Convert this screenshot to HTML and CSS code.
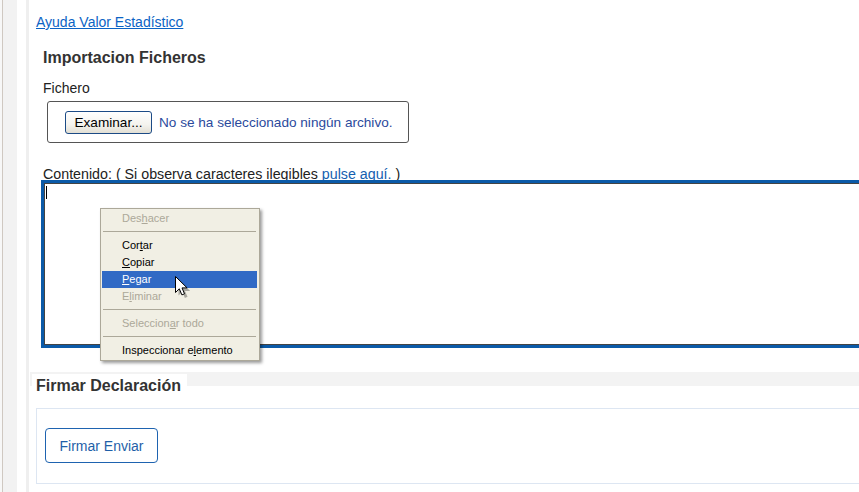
FILE: index.html
```html
<!DOCTYPE html>
<html lang="es">
<head>
<meta charset="utf-8">
<title>Importacion Ficheros</title>
<link rel="stylesheet" href="styles.css">
</head>
<body>
<div class="layout">
  <div class="rail"></div>
  <div class="main">
    <a class="help-link" href="#">Ayuda Valor Estadístico</a>

    <section class="import">
      <h2 class="section-title">Importacion Ficheros</h2>
      <div class="label">Fichero</div>
      <div class="file-box">
        <span class="xp-button">Examinar...</span>
        <span class="file-status">No se ha seleccionado ningún archivo.</span>
      </div>
      <div class="content-label">Contenido: ( Si observa caracteres ilegibles <a class="inline-link" href="#">pulse aquí.</a> )</div>
      <div class="textarea"><span class="caret"></span></div>
    </section>

    <section class="sign">
      <div class="sign-band"></div>
      <div class="legend">Firmar Declaración</div>
      <div class="sign-box">
        <button class="primary-btn" type="button">Firmar Enviar</button>
      </div>
    </section>
  </div>
</div>

<div class="context-menu">
  <div class="menu-item disabled">Des<u>h</u>acer</div>
  <div class="menu-sep"></div>
  <div class="menu-item">Cor<u>t</u>ar</div>
  <div class="menu-item"><u>C</u>opiar</div>
  <div class="menu-item active"><u>P</u>egar</div>
  <div class="menu-item disabled">E<u>l</u>iminar</div>
  <div class="menu-sep"></div>
  <div class="menu-item disabled">Seleccion<u>a</u>r todo</div>
  <div class="menu-sep"></div>
  <div class="menu-item">Inspeccionar e<u>l</u>emento</div>
</div>

<svg class="cursor" width="16" height="24" viewBox="0 0 16 24">
  <path d="M2 2 L2 18 L5.8 14.3 L8.4 20.4 L11 19.3 L8.5 13.4 L13.6 13.4 Z" fill="rgba(0,0,0,0.3)" transform="translate(1.5,1.5)"/>
  <path d="M0.5 0.5 L0.5 16.5 L4.3 12.8 L6.9 18.9 L9.5 17.8 L7 11.9 L12.1 11.9 Z" fill="#fff" stroke="#000" stroke-width="1" stroke-linejoin="miter"/>
</svg>
</body>
</html>
```
FILE: styles.css
```css
html, body {
  margin: 0;
  padding: 0;
}
body {
  width: 859px;
  height: 492px;
  overflow: hidden;
  background: #fff;
  font-family: "Liberation Sans", Arial, sans-serif;
  font-size: 14px;
  color: #222;
  position: relative;
}
.layout {
  display: flex;
  height: 492px;
}
.rail {
  flex: none;
  width: 26px;
  border-right: 3px solid #efefef;
  background: linear-gradient(to right, #f7f7f7 0 2px, #cfc8c1 2px 3px, #f2f2f2 3px 17px, #fff 17px 26px);
}
.main {
  flex: 1;
  min-width: 0;
}
.help-link {
  display: block;
  width: max-content;
  margin: 14px 0 0 7px;
  line-height: 16px;
  color: #0b63c5;
  text-decoration: underline;
}
.import {
  padding-left: 14px;
}
.section-title {
  margin: 18px 0 0 0;
  font-size: 16px;
  line-height: 20px;
  font-weight: bold;
  color: #333;
}
.label {
  margin-top: 12px;
  line-height: 16px;
  color: #222;
}
.file-box {
  margin: 5px 0 0 4px;
  width: 343px;
  height: 40px;
  border: 1px solid #555;
  border-radius: 3px;
  padding-left: 17px;
  display: flex;
  align-items: center;
  gap: 7px;
}
.xp-button {
  box-sizing: border-box;
  width: 87px;
  height: 23px;
  border: 1px solid #1c4b86;
  border-radius: 3px;
  background: linear-gradient(#ffffff, #f4f3ee 60%, #e2dfd4);
  color: #000;
  font-size: 13.6px;
  line-height: 21px;
  text-align: center;
}
.file-status {
  color: #2b4a9c;
  font-size: 13.6px;
}
.content-label {
  margin-top: 24px;
  line-height: 14px;
  font-size: 14.25px;
  color: #222;
}
.inline-link {
  color: #1560b0;
  text-decoration: underline;
  text-decoration-color: #8fb0d8;
}
.textarea {
  position: relative;
  margin: 2px 0 0 1px;
  width: 900px;
  height: 160px;
  border: 1px solid #444;
  box-shadow: 0 0 0 3px #0b5aa8;
  background: #fff;
}
.caret {
  position: absolute;
  left: 1px;
  top: 2px;
  width: 1px;
  height: 13px;
  background: #000;
}
.sign {
  margin: 27px 0 0 1px;
}
.sign-band {
  height: 14px;
  background: #f3f3f3;
}
.legend {
  position: relative;
  width: max-content;
  margin: -12px 0 0 2px;
  padding: 2px 6px 0 4px;
  background: #fff;
  font-size: 16px;
  line-height: 20px;
  font-weight: bold;
  color: #333;
}
.sign-box {
  margin: 12px 0 0 6px;
  width: 900px;
  border: 1px solid #dde6f2;
  padding: 19px 0 20px 8px;
}
.primary-btn {
  display: block;
  width: 113px;
  height: 35px;
  border: 1px solid #1e63b0;
  border-radius: 4px;
  background: #fff;
  color: #1f5fa8;
  font-family: "Liberation Sans", Arial, sans-serif;
  font-size: 14px;
  padding: 0;
}
.context-menu {
  position: absolute;
  left: 100px;
  top: 208px;
  width: 155px;
  padding: 1px 2px 1px 1px;
  border: 1px solid #aca899;
  background: #f1efe4;
  box-shadow: 2px 2px 3px rgba(0, 0, 0, 0.4);
  font-family: "Liberation Sans", Tahoma, sans-serif;
  font-size: 11px;
}
.menu-item {
  height: 17px;
  line-height: 17px;
  padding-left: 20px;
  color: #000;
  white-space: nowrap;
}
.menu-item.disabled {
  color: #aca899;
}
.menu-item.active {
  background: #316ac5;
  color: #fff;
}
.menu-sep {
  height: 10px;
  position: relative;
}
.menu-sep::after {
  content: "";
  position: absolute;
  left: 1px;
  right: 1px;
  top: 4px;
  height: 1px;
  background: #aca899;
}
.cursor {
  position: absolute;
  left: 175px;
  top: 276px;
}
```
